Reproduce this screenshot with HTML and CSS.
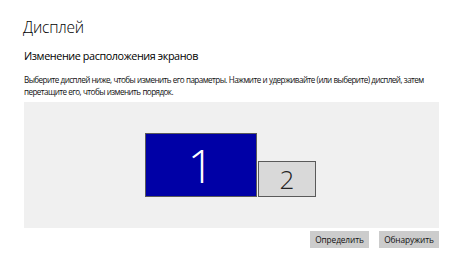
FILE: index.html
```html
<!DOCTYPE html>
<html lang="ru">
<head>
<meta charset="utf-8">
<link rel="stylesheet" href="styles.css">
</head>
<body>
<div class="page">
  <h1 class="title">Дисплей</h1>
  <h2 class="subtitle">Изменение расположения экранов</h2>
  <p class="desc">Выберите дисплей ниже, чтобы изменить его параметры. Нажмите и удерживайте (или выберите) дисплей, затем перетащите его, чтобы изменить порядок.</p>
  <div class="canvas">
    <div class="monitor primary">1</div>
    <div class="monitor secondary">2</div>
  </div>
  <div class="actions">
    <button class="btn">Определить</button>
    <button class="btn">Обнаружить</button>
  </div>
</div>
</body>
</html>
```
FILE: styles.css
```css
html, body {
  margin: 0;
  padding: 0;
  background: #ffffff;
}
body {
  width: 474px;
  height: 266px;
  overflow: hidden;
  font-family: "Open Sans", "Noto Sans", sans-serif;
  color: #000;
}
.page {
  display: flex;
  flex-direction: column;
  padding: 0 30px 0 24px;
}
.title {
  margin: 17px 0 0 -1px;
  font-size: 15.5px;
  font-weight: 300;
  line-height: 20px;
  letter-spacing: -0.2px;
}
.subtitle {
  margin: 12px 0 0;
  font-size: 10.8px;
  font-weight: 400;
  line-height: 14px;
  letter-spacing: -0.4px;
}
.desc {
  margin: 11px 0 0;
  width: 418px;
  font-size: 8.1px;
  line-height: 12px;
  letter-spacing: -0.56px;
  word-spacing: 0.3px;
  color: #111;
}
.canvas {
  position: relative;
  margin-top: 4px;
  width: 415px;
  height: 126px;
  background: #f0f0f0;
}
.monitor {
  position: absolute;
  box-sizing: border-box;
  border: 1px solid #5a5a5a;
  display: flex;
  align-items: center;
  justify-content: center;
  font-family: "Open Sans", sans-serif;
  font-weight: 300;
}
.primary {
  left: 121px;
  top: 31px;
  width: 112px;
  height: 64px;
  background: #0000a6;
  color: #ffffff;
  font-size: 46px;
}
.secondary {
  left: 234px;
  top: 59px;
  width: 58px;
  height: 36px;
  background: #d9d9d9;
  color: #222;
  font-size: 26px;
}
.actions {
  display: flex;
  justify-content: flex-end;
  gap: 10px;
  margin-top: 3px;
  width: 415px;
}
.btn {
  border: none;
  background: #cccccc;
  color: #111;
  font-family: "Open Sans", sans-serif;
  font-size: 8.3px;
  letter-spacing: -0.1px;
  height: 17px;
  padding: 0;
  width: 59px;
}
.btn + .btn {
  width: 60px;
}
```
